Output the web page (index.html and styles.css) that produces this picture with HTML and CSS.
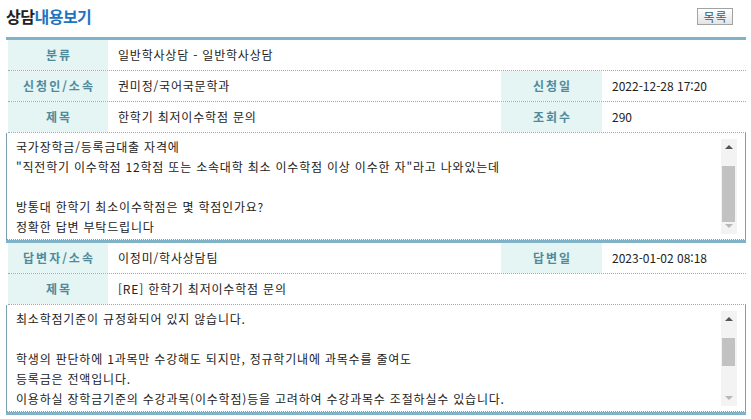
FILE: index.html
```html
<!DOCTYPE html>
<html lang="ko">
<head>
<meta charset="utf-8">
<title>상담내용보기</title>
<link rel="stylesheet" href="styles.css">
</head>
<body>
<div class="page">
  <div class="head">
    <h1 class="title"><span class="dark">상담</span><span class="blue">내용보기</span></h1>
    <button class="btn">목록</button>
  </div>

  <div class="board">
    <div class="row">
      <div class="lbl">분류</div>
      <div class="val wide">일반학사상담 - 일반학사상담</div>
    </div>
    <div class="row">
      <div class="lbl">신청인/소속</div>
      <div class="val">권미정/국어국문학과</div>
      <div class="lbl">신청일</div>
      <div class="val num">2022-12-28 17:20</div>
    </div>
    <div class="row">
      <div class="lbl">제목</div>
      <div class="val">한학기 최저이수학점 문의</div>
      <div class="lbl">조회수</div>
      <div class="val num">290</div>
    </div>
    <div class="content">
      <div class="text">
        <p>국가장학금/등록금대출 자격에</p>
        <p>"직전학기 이수학점 12학점 또는 소속대학 최소 이수학점 이상 이수한 자"라고 나와있는데</p>
        <p>&nbsp;</p>
        <p>방통대 한학기 최소이수학점은 몇 학점인가요?</p>
        <p>정확한 답변 부탁드립니다</p>
      </div>
      <div class="sbar">
        <span class="arr up"></span>
        <span class="thumb t1"></span>
        <span class="arr down"></span>
      </div>
    </div>
  </div>

  <div class="board last">
    <div class="row">
      <div class="lbl">답변자/소속</div>
      <div class="val">이정미/학사상담팀</div>
      <div class="lbl">답변일</div>
      <div class="val num">2023-01-02 08:18</div>
    </div>
    <div class="row">
      <div class="lbl">제목</div>
      <div class="val wide">[RE] 한학기 최저이수학점 문의</div>
    </div>
    <div class="content">
      <div class="text">
        <p>최소학점기준이 규정화되어 있지 않습니다.</p>
        <p>&nbsp;</p>
        <p>학생의 판단하에 1과목만 수강해도 되지만, 정규학기내에 과목수를 줄여도</p>
        <p>등록금은 전액입니다.</p>
        <p>이용하실 장학금기준의 수강과목(이수학점)등을 고려하여 수강과목수 조절하실수 있습니다.</p>
      </div>
      <div class="sbar">
        <span class="arr up"></span>
        <span class="thumb t2"></span>
        <span class="arr down"></span>
      </div>
    </div>
  </div>
</div>
</body>
</html>
```

FILE: styles.css
```css
* { box-sizing: border-box; }
html, body { margin: 0; padding: 0; background: #fff; }
body {
  font-family: "Noto Sans CJK KR", "Noto Sans", sans-serif;
  font-size: 12px;
  color: #222;
}
.page { width: 751px; padding: 0 5px 0 6px; }

.head {
  display: flex;
  justify-content: space-between;
  align-items: flex-start;
  height: 37px;
  padding-top: 5px;
}
.title {
  margin: 0;
  font-size: 16px;
  line-height: 22px;
  font-weight: bold;
  letter-spacing: -0.5px;
}
.title .dark { color: #222; }
.title .blue { color: #1f74c0; }
.btn {
  margin: 3px 13px 0 0;
  width: 36px;
  height: 17px;
  padding: 0 0 0 1px;
  border: 1px solid #a3a3a3;
  background: linear-gradient(#ffffff, #e4e4e4);
  font-family: inherit;
  font-size: 12px;
  line-height: 15px;
  letter-spacing: 1px;
  color: #2c5f86;
}

.board {
  width: 740px;
  border-top: 3px solid #80b3c7;
}
.board.last { border-bottom: 3px solid #80b3c7; }

.row {
  display: grid;
  grid-template-columns: 100px 393px 101px 1fr;
  height: 31px;
  margin-left: 2px;
  border-bottom: 1px dotted #94aebb;
}
.lbl {
  background: #e5f5f3;
  color: #4f8a9c;
  font-weight: bold;
  text-align: center;
  line-height: 30px;
  letter-spacing: 2px;
  padding-left: 2px;
}
.val {
  padding-left: 10px;
  line-height: 30px;
  white-space: nowrap;
  letter-spacing: 0.8px;
}
.val.num { letter-spacing: 0; }
.val.wide { grid-column: 2 / 5; }

.content {
  display: flex;
  height: 107px;
  border-left: 1px solid #7c9fb0;
  border-right: 1px solid #7c9fb0;
  border-bottom: 1px dotted #7c9fb0;
}
.text {
  flex: 1;
  padding: 4px 0 0 9px;
  line-height: 20px;
  color: #222;
  white-space: nowrap;
  overflow: hidden;
  letter-spacing: 0.8px;
}
.text p { margin: 0; }

.sbar {
  position: relative;
  width: 16px;
  margin: 6px 8px 5px 0;
  background: #f3f3f3;
}
.arr {
  position: absolute;
  left: 4px;
  width: 0;
  height: 0;
  border-left: 4px solid transparent;
  border-right: 4px solid transparent;
}
.arr.up { top: 6px; border-bottom: 4px solid #555; }
.arr.down { bottom: 6px; border-top: 4px solid #b8b8b8; }
.thumb {
  position: absolute;
  left: 1px;
  width: 13px;
  background: #c2c2c2;
}
.thumb.t1 { top: 27px; height: 56px; }
.thumb.t2 { top: 27px; height: 28px; }
```
